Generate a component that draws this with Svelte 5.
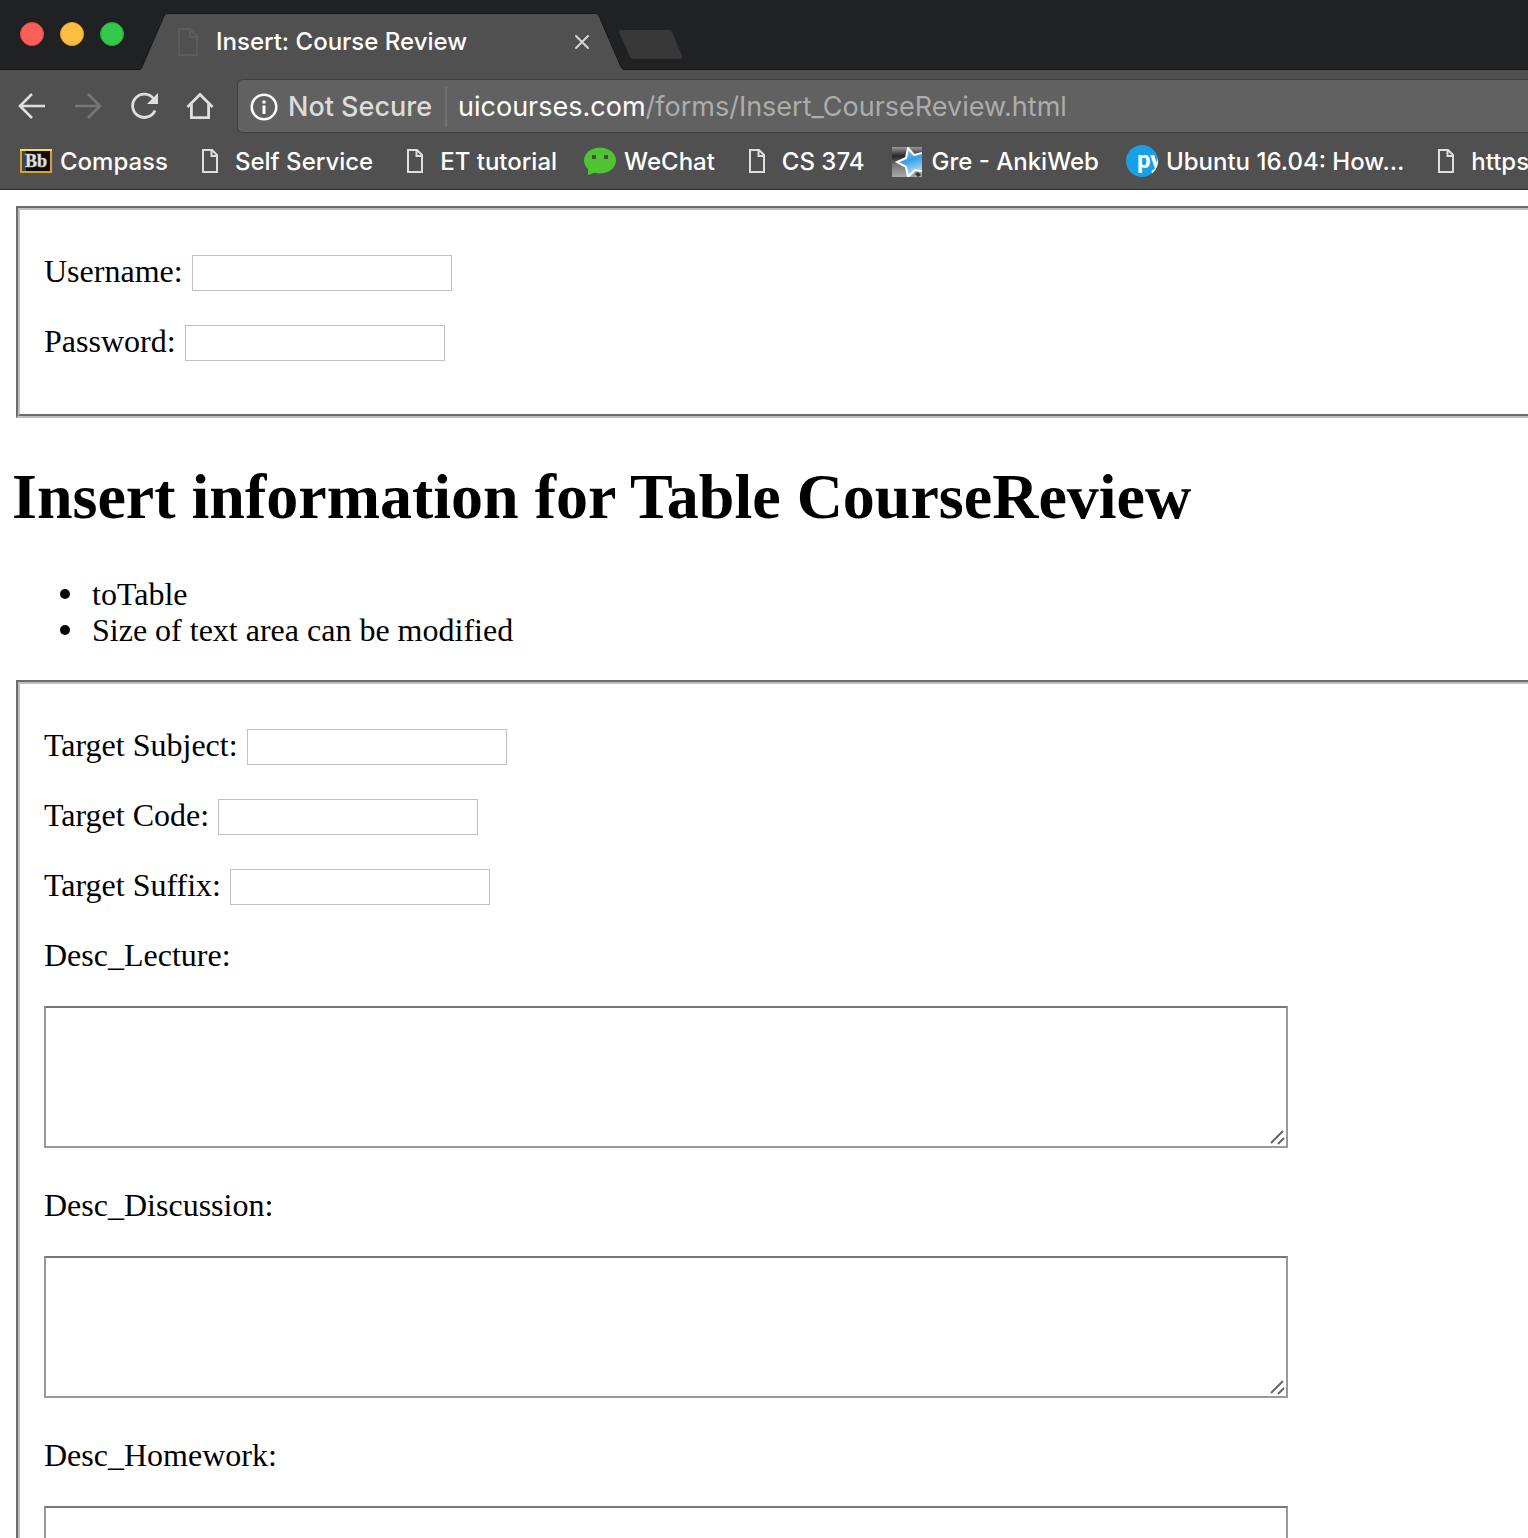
<script>
  const bookmarks = [
    { name: 'Compass', icon: 'bb' },
    { name: 'Self Service', icon: 'doc' },
    { name: 'ET tutorial', icon: 'doc' },
    { name: 'WeChat', icon: 'wechat' },
    { name: 'CS 374', icon: 'doc' },
    { name: 'Gre - AnkiWeb', icon: 'anki' },
    { name: 'Ubuntu 16.04: How…', icon: 'py' },
    { name: 'https', icon: 'doc' }
  ];
  const targets = [
    { id: 'subject', label: 'Target Subject:' },
    { id: 'code', label: 'Target Code:' },
    { id: 'suffix', label: 'Target Suffix:' }
  ];
  const descriptions = [
    { id: 'lecture', label: 'Desc_Lecture:' },
    { id: 'discussion', label: 'Desc_Discussion:' },
    { id: 'homework', label: 'Desc_Homework:' }
  ];
</script>

<div class="window">
  <header class="chrome">
    <div class="tabstrip">
      <div class="lights">
        <button class="light red" aria-label="Close window"></button>
        <button class="light yellow" aria-label="Minimize window"></button>
        <button class="light green" aria-label="Zoom window"></button>
      </div>
      <div class="tab">
        <svg class="tab-shape" viewBox="0 0 484 57" aria-hidden="true">
          <path d="M0 57 Q1 56 2 54 L24 3 Q25 0 28 0 H455 Q458 0 459 3 L481 54 Q482 56 484 57Z" fill="#505050" />
          <path d="M0 56.500 Q1 56 2 54 L24 3 Q25 .5 28 .5 H455 Q458 .5 459 3 L481 54 Q482 56 484 56.500" fill="none" stroke="#161718" />
        </svg>
        <svg class="tab-doc" width="20" height="28" viewBox="0 0 20 28" fill="none" stroke="#5c5c5c" stroke-width="2" aria-hidden="true">
          <path d="M1 1H12L19 8V27H1ZM12 1V9H19" />
        </svg>
        <span class="tab-title">Insert: Course Review</span>
        <button class="tab-close" aria-label="Close tab">
          <svg width="16" height="16" viewBox="0 0 16 16" stroke="#d6d6d6" stroke-width="2" stroke-linecap="round"><path d="M2 2L14 14M14 2L2 14" /></svg>
        </button>
      </div>
      <button class="new-tab" aria-label="New tab">
        <svg width="64" height="30" viewBox="0 0 64 30"><path d="M2 0H50Q52 0 53 2L63 26Q64 29 61 29H15Q12 29 11 27L0 2Q0 0 2 0Z" fill="#383838" /></svg>
      </button>
    </div>

    <div class="toolbar">
      <nav class="nav" aria-label="Navigation">
        <button aria-label="Back">
          <svg width="28" height="28" viewBox="0 0 28 28" fill="none" stroke="#dedede" stroke-width="2.600"><path d="M27 14H3M14 2L2 14L14 26" /></svg>
        </button>
        <button aria-label="Forward">
          <svg width="28" height="28" viewBox="0 0 28 28" fill="none" stroke="#777" stroke-width="2.600"><path d="M1 14H25M14 2L26 14L14 26" /></svg>
        </button>
        <button aria-label="Reload">
          <svg width="28" height="28" viewBox="0 0 28 28"><path d="M23.500 6.500A11.700 11.700 0 1 0 25 18.500" fill="none" stroke="#dedede" stroke-width="2.800" /><path d="M28 1V12H17Z" fill="#dedede" /></svg>
        </button>
        <button aria-label="Home">
          <svg width="28" height="28" viewBox="0 0 28 28" fill="none" stroke="#dedede" stroke-width="2.800"><path d="M1.500 15L14 2.500L26.500 15M5.400 12V25.600H22.600V12" /></svg>
        </button>
      </nav>
      <div class="omnibox">
        <svg width="28" height="28" viewBox="0 0 28 28" aria-hidden="true"><circle cx="14" cy="14" r="12.300" fill="none" stroke="#fff" stroke-width="2.500" /><path d="M12.500 7.500h3v3h-3zM12.500 12.500h3V21h-3z" fill="#fff" /></svg>
        <span class="security">Not Secure</span>
        <a class="url" href="#top">uicourses.com<span>/forms/Insert_CourseReview.html</span></a>
      </div>
    </div>

    <nav class="bookmarks" aria-label="Bookmarks">
      {#each bookmarks as b}
        <a href="#top">
          {#if b.icon === 'bb'}
            <svg width="32" height="32" viewBox="0 0 32 32" aria-hidden="true"><rect x="1" y="5" width="30" height="22" fill="#0c0c0c" stroke="#d9a132" stroke-width="2" /><path d="M0 5H32" stroke="#ffdc38" stroke-width="2" /><path d="M2 6h4v20H2z" fill="#444" /><text x="16" y="22" text-anchor="middle" font-family="Liberation Serif, serif" font-size="18" font-weight="700" fill="#e8e8e8" stroke="#bbb" stroke-width=".6">Bb</text></svg>
          {:else if b.icon === 'doc'}
            <svg width="32" height="32" viewBox="0 0 32 32" fill="none" stroke="#dedede" stroke-width="2" aria-hidden="true"><path d="M8 5H17L22 10V27H8ZM16.500 5V11H22" /></svg>
          {:else if b.icon === 'wechat'}
            <svg width="32" height="32" viewBox="0 0 32 32" aria-hidden="true"><ellipse cx="16" cy="15.500" rx="16" ry="13" fill="#51c332" /><path d="M4 22V30L13 27Z" fill="#51c332" /><path d="M8 10h4v4H8zM20 10h4v4h-4z" fill="#46513f" /></svg>
          {:else if b.icon === 'anki'}
            <svg width="32" height="32" viewBox="0 0 32 32" aria-hidden="true">
              <defs>
                <linearGradient id="star" x1="0" y1="0" x2="0.300" y2="1"><stop offset="0" stop-color="#9ed4f7" /><stop offset=".5" stop-color="#3a9fe6" /><stop offset="1" stop-color="#b9e0fa" /></linearGradient>
                <linearGradient id="stone" x1="0" y1="0" x2="0" y2="1"><stop offset="0" stop-color="#999" /><stop offset=".3" stop-color="#262626" /><stop offset=".6" stop-color="#777" /><stop offset="1" stop-color="#aaa" /></linearGradient>
                <clipPath id="tile"><rect x="1" y="2" width="30" height="30" /></clipPath>
              </defs>
              <g clip-path="url(#tile)"><rect x="1" y="2" width="30" height="30" fill="url(#stone)" /><path d="M17 3L23 10L35 7V27L24 25L17 32L15 22L6 17L15 13Z" fill="url(#star)" stroke="#fff" stroke-width="2" /><path d="M24 29l3-2 3 3-3 2z" fill="#333" /></g>
            </svg>
          {:else}
            <svg width="32" height="32" viewBox="0 0 32 32" aria-hidden="true"><defs><clipPath id="disc"><circle cx="16" cy="16" r="16" /></clipPath></defs><circle cx="16" cy="16" r="16" fill="#189fe8" /><g clip-path="url(#disc)"><text x="11" y="23" font-family="Roboto, sans-serif" font-size="24" font-weight="700" fill="#fff">py</text></g></svg>
          {/if}
          <span>{b.name}</span>
        </a>
      {/each}
    </nav>
  </header>

  <main id="top">
    <fieldset>
      <p><label for="username">Username:</label> <input id="username" type="text" /></p>
      <p><label for="password">Password:</label> <input id="password" type="password" /></p>
    </fieldset>

    <h1>Insert information for Table CourseReview</h1>
    <ul>
      <li>toTable</li>
      <li>Size of text area can be modified</li>
    </ul>

    <fieldset>
      {#each targets as t}
        <p><label for={t.id}>{t.label}</label> <input id={t.id} type="text" /></p>
      {/each}
      {#each descriptions as d}
        <div class="description">
          <label for={d.id}>{d.label}</label>
          <div class="area">
            <textarea id={d.id}></textarea>
            <svg class="grip" width="16" height="16" viewBox="0 0 16 16" stroke="#666" stroke-width="2" aria-hidden="true"><path d="M1 13L13 1M8 14L14 8" /></svg>
          </div>
        </div>
      {/each}
    </fieldset>
  </main>
</div>

<style>
  :global(body) { background: #fff; }
  .window { height: 100vh; overflow: hidden; }
  button { border: 0; padding: 0; background: none; display: flex; }
  a { text-decoration: none; }
  svg { display: block; flex: none; }

  .chrome {
    font-family: Inter, "Liberation Sans", sans-serif;
    background: #505050;
    color: #fff;
    border-bottom: 1px solid #2c2c2c;
  }
  .tabstrip {
    display: flex;
    height: 70px;
    box-sizing: border-box;
    padding: 13px 20px 0;
    background: #202123;
    box-shadow: inset 0 -1px #161718;
  }
  .lights { display: flex; gap: 16px; padding-top: 9px; width: 120px; }
  .light { width: 24px; height: 24px; border-radius: 50%; }
  .red { background: #fc5f5a; border: 1px solid #e24842; }
  .yellow { background: #fdbd40; border: 1px solid #e0a032; }
  .green { background: #34c84a; border: 1px solid #24ac36; }
  .tab {
    position: relative;
    display: flex;
    align-items: center;
    width: 484px;
    height: 57px;
    box-sizing: border-box;
    padding: 0 34px 0 38px;
  }
  .tab-shape { position: absolute; inset: 0; width: 100%; height: 100%; }
  .tab-doc, .tab-title, .tab-close { position: relative; }
  .tab-title { flex: 1; margin-left: 18px; font-size: 24px; line-height: 28px; font-weight: 500; white-space: nowrap; }
  .new-tab { margin: 17px 0 0 -5px; align-self: flex-start; }

  .toolbar { display: flex; align-items: center; height: 72px; padding-left: 18px; }
  .nav { display: flex; gap: 28px; }
  .omnibox {
    flex: 1;
    display: flex;
    align-items: center;
    height: 54px;
    box-sizing: border-box;
    margin: 0 -8px 0 23px;
    padding: 2px 0 0 12px;
    border: 1px solid #3e3e3e;
    border-radius: 6px;
    background: #616161;
    font-size: 27px;
    line-height: 40px;
    white-space: nowrap;
  }
  .security { margin-left: 10px; padding-right: 13px; font-weight: 500; color: #dcdcdc; border-right: 2px solid #717171; }
  .url { margin-left: 11px; color: #fff; }
  .url span { color: #acacac; }

  .bookmarks { display: flex; gap: 27px; height: 47px; padding: 0 20px; overflow: hidden; }
  .bookmarks a {
    display: flex;
    flex: none;
    gap: 8px;
    height: 38px;
    align-items: center;
    color: #fff;
    font-size: 24px;
    font-weight: 500;
    white-space: nowrap;
  }

  main {
    padding: 16px 0 0 12px;
    color: #000;
    font-family: "Liberation Serif", serif;
    font-size: 32px;
    line-height: 36px;
  }
  fieldset { margin: 0 -8px 0 4px; padding: 11px 24px 21px; border: 4px groove #c0c0c0; }
  p { display: flex; align-items: flex-start; gap: 9px; height: 38px; margin: 32px 0; }
  input {
    width: 260px;
    height: 36px;
    box-sizing: border-box;
    margin: 2px 0 0;
    padding: 2px 4px;
    border: 1px solid #c0c0c0;
    background: #fff;
    font-size: 26px;
  }
  h1 { margin: 42px 0; font-size: 64px; line-height: 74px; white-space: nowrap; }
  ul { margin: 0 0 32px; padding-left: 48px; list-style: none; }
  li { display: flex; align-items: center; gap: 22px; }
  li::before { content: ""; width: 10px; height: 10px; border-radius: 50%; background: #000; }
  .description { margin-bottom: 39px; }
  .description label { display: block; height: 37px; margin-bottom: 32px; }
  .area { position: relative; width: fit-content; }
  textarea {
    display: block;
    width: 1244px;
    height: 142px;
    box-sizing: border-box;
    padding: 4px;
    border: 2px solid #999;
    border-top-color: #777;
    background: #fff;
    font: 26px "Liberation Mono", monospace;
  }
  textarea::-webkit-resizer { background: transparent; }
  .grip { position: absolute; right: 2px; bottom: 2px; pointer-events: none; }
</style>
